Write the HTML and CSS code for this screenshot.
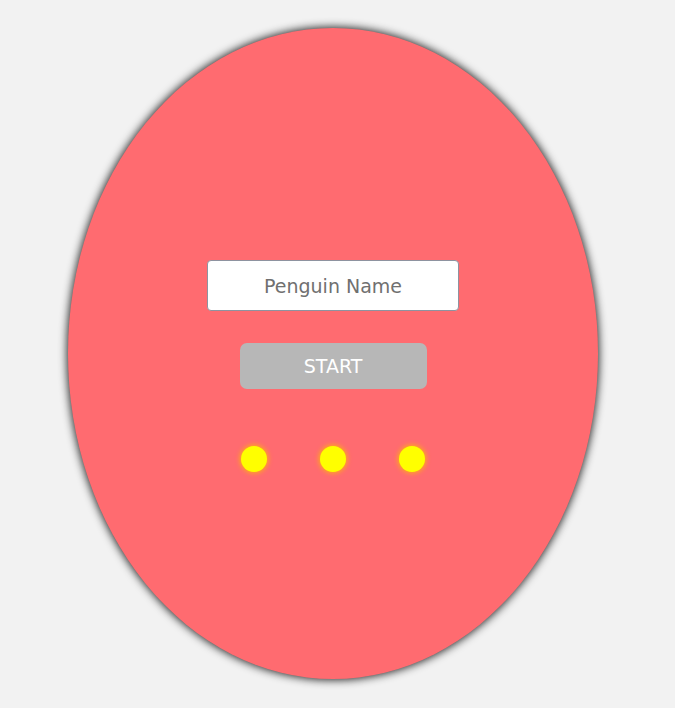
FILE: index.html
```html
<!DOCTYPE html>
<html>
<head>
<meta charset="utf-8">
<link rel="stylesheet" href="styles.css">
</head>
<body>
<div class="egg">
  <input class="name" type="text" placeholder="Penguin Name">
  <button class="start">START</button>
  <div class="dots">
    <span class="dot"></span>
    <span class="dot"></span>
    <span class="dot"></span>
  </div>
</div>
</body>
</html>
```
FILE: styles.css
```css
html, body {
  margin: 0;
  padding: 0;
  background: #f2f2f2;
  font-family: "DejaVu Sans", sans-serif;
}
body {
  height: 708px;
  overflow: hidden;
}
.egg {
  box-sizing: border-box;
  width: 530px;
  height: 651px;
  margin: 28px 0 0 68px;
  border-radius: 50%;
  background: #ff6b70;
  box-shadow: 0 0 9px 1px rgba(0, 0, 0, 0.85);
  display: flex;
  flex-direction: column;
  align-items: center;
  padding-top: 232px;
}
.name {
  box-sizing: border-box;
  width: 252px;
  height: 51px;
  border: 1px solid #8e93a0;
  border-radius: 4px;
  background: #fff;
  font-family: "DejaVu Sans", sans-serif;
  font-size: 19px;
  text-align: center;
  color: #333;
  outline: none;
  padding: 0;
}
.name::placeholder {
  color: #707070;
}
.start {
  margin-top: 32px;
  width: 187px;
  height: 46px;
  border: none;
  border-radius: 7px;
  background: #b7b7b7;
  color: #fff;
  font-family: "DejaVu Sans", sans-serif;
  font-size: 19px;
  padding: 0;
}
.dots {
  margin-top: 57px;
  display: flex;
  gap: 53px;
}
.dot {
  width: 26px;
  height: 26px;
  border-radius: 50%;
  background: #ffff00;
  box-shadow: 0 0 5px 1px rgba(255, 190, 0, 0.85);
}
```
